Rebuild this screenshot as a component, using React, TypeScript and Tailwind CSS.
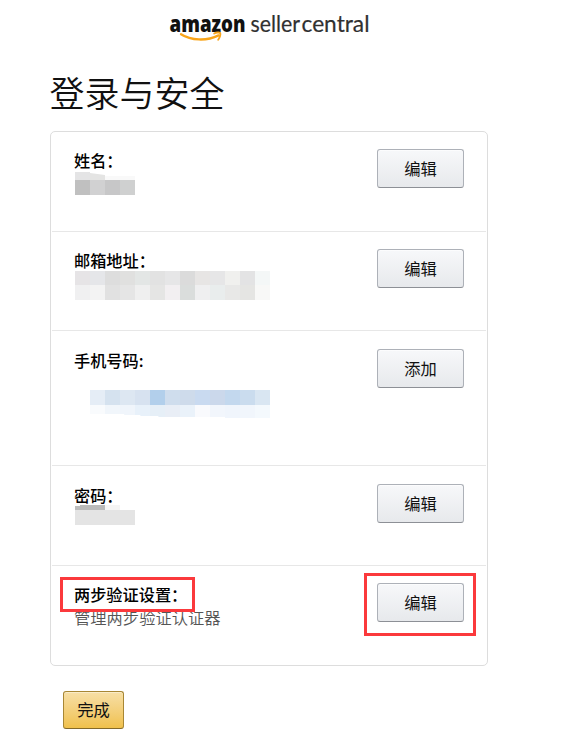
import type { ReactNode } from "react";
import clsx from "clsx";

type Cell = [w: number, color: string];

const nameCells: Cell[] = [[15, "#c0c0c0"], [15, "#d1d1d2"], [15, "#c7c7c8"], [15, "#cfd0d0"]];

const mailTop: Cell[] = [
  [15, "#e6e4e6"], [15, "#e5e6e9"], [15, "#dddddd"], [15, "#e0e0df"], [15, "#e3e6e5"], [15, "#e2e2e2"],
  [15, "#e6e6e7"], [15, "#dbdbdb"], [15, "#e7e5e4"], [15, "#e6e6e7"], [15, "#f0f0ee"], [15, "#e3e3e4"], [15, "#f4f7f7"],
];
const mailBottom: Cell[] = [
  [15, "#f0f0f1"], [15, "#f3f3f3"], [15, "#e1e1e1"], [15, "#e5e5e5"], [15, "#efefef"], [15, "#e5e5e4"],
  [15, "#f2eff1"], [15, "#dadddc"], [15, "#efeff0"], [15, "#e9eded"], [15, "#e8e8e7"], [15, "#e5e5e3"], [15, "#f8f8f7"],
];

const phoneTop: Cell[] = [
  [15, "#e5edf6"], [15, "#d5e2ef"], [15, "#dde7f2"], [15, "#d7e2f0"], [15, "#b2cfeb"], [15, "#cfdded"],
  [15, "#cedbeb"], [15, "#c9daf0"], [15, "#cbd8eb"], [15, "#c3d8ee"], [15, "#cadcee"], [15, "#d9e6f2"],
];
const phoneBottom: Cell[] = [
  [15, "#f9fbfd"], [15, "#f1f6fb"], [15, "#f0f5fb"], [15, "#e8f1fa"], [15, "#e6eff7"], [15, "#e9eef6"],
  [15, "#eaf2fa"], [15, "#f9fafd"], [15, "#f2f6fc"], [15, "#f0f5fc"], [15, "#f1f6fc"], [15, "#f4f9fd"],
];

const Mosaic = ({ cells, className }: { cells: Cell[]; className: string }) => (
  <div className={clsx("flex", className)}>
    {cells.map(([w, color], i) => (
      <span key={i} style={{ width: w, backgroundColor: color }} />
    ))}
  </div>
);

const EditButton = ({ children }: { children: ReactNode }) => (
  <button className="h-[39px] w-[87px] shrink-0 rounded-[3px] border border-[#adb1b8] border-b-[#8d9096] bg-linear-to-b from-[#f7f8fa] to-[#e7e9ec] text-[16.3px] leading-[37px] text-[#111] shadow-[inset_0_1px_0_rgba(255,255,255,0.6)]">
    {children}
  </button>
);

interface RowProps {
  label: string;
  action: string;
  className: string;
  highlight?: boolean;
  children?: ReactNode;
}

const Row = ({ label, action, className, highlight, children }: RowProps) => (
  <div className={clsx("mx-px flex justify-between border-[#e7e7e7] pr-[22px] pl-[22px]", className)}>
    <div>
      <div className="relative">
        <h2 className="h-6 text-[16.2px] leading-[22px] font-medium whitespace-nowrap text-black">{label}</h2>
        {highlight && <div className="absolute -top-[6px] -left-[14px] z-10 h-[35px] w-[135px] border-3 border-[#fb393c]" />}
      </div>
      {children}
    </div>
    <div className="relative">
      <EditButton>{action}</EditButton>
      {highlight && <div className="absolute -top-[10px] -left-[13px] h-[63px] w-[112px] border-3 border-[#fb393c]" />}
    </div>
  </div>
);

const Logo = () => (
  <svg className="ml-[168px] block overflow-visible" width="202" height="34" viewBox="0 0 202 34">
    <text x="1.5" y="22" fontFamily="Open Sans, sans-serif" fontSize="23.5" fontWeight="800" fill="#111" textLength="76" lengthAdjust="spacingAndGlyphs">
      amazon
    </text>
    <text x="82.5" y="22" fontFamily="Lato, sans-serif" fontSize="24" fill="#303030" stroke="#303030" strokeWidth=".2" textLength="49.500" lengthAdjust="spacingAndGlyphs">
      seller
    </text>
    <text x="133.500" y="22" fontFamily="Lato, sans-serif" fontSize="24" fill="#303030" stroke="#303030" strokeWidth=".2" textLength="68" lengthAdjust="spacingAndGlyphs">
      central
    </text>
    <path d="M13 24.200c10 6.400 25.500 7.200 37.600 1.200" fill="none" stroke="#f9a51a" strokeWidth="2.300" strokeLinecap="round" />
    <path d="M46.200 23.500c2-1.200 5.300-1.300 6-.5.500.8-.1 4.300-2 6.800" fill="none" stroke="#f9a51a" strokeWidth="1.900" strokeLinecap="round" />
  </svg>
);

const App = () => {
  return (
    <div className="h-[753px] w-[565px] overflow-hidden bg-white pt-[10px] font-['Noto_Sans_CJK_SC',sans-serif] text-[#111]">
      <Logo />
      <h1 className="mt-[23px] ml-[49.5px] h-[52px] text-[35px] leading-[50px] font-[350]">登录与安全</h1>

      <section className="mt-[12px] ml-[50px] w-[438px] rounded-[5px] border border-[#ddd]">
        <Row label="姓名：" action="编辑" className="h-[100px] border-b pt-[17px]">
          <div className="ml-px flex h-[7px] w-[60px]">
            <span className="mt-[-1px] w-[15px] bg-[#e4e4e5]" />
            <span className="w-[15px] bg-[#e4e4e3] [clip-path:polygon(0_0,100%_30%,100%_100%,0_100%)]" />
            <span className="mt-[3px] w-[30px] bg-[#f9f9f9]" />
          </div>
          <Mosaic cells={nameCells} className="ml-px h-[15px]" />
        </Row>
        <Row label="邮箱地址：" action="编辑" className="h-[99px] border-b pt-[17px]">
          <Mosaic cells={mailTop} className="mt-[-2px] ml-px h-[14px]" />
          <Mosaic cells={mailBottom} className="ml-px h-[15px]" />
        </Row>
        <Row label="手机号码:" action="添加" className="h-[135px] border-b pt-[18px]">
          <Mosaic cells={phoneTop} className="mt-[17px] ml-[16px] h-[15px]" />
          <Mosaic
            cells={phoneBottom}
            className="ml-[16px] h-[13px] [clip-path:polygon(0_0,100%_0,100%_100%,75%_100%,75%_12px,38%_12px,38%_11px,28%_11px,28%_10px,19%_10px,19%_9px,0_9px)]"
          />
        </Row>
        <Row label="密码：" action="编辑" className="h-[100px] border-b pt-[18px]">
          <div className="mt-[-3px] ml-px flex h-[5px]">
            <span className="mt-px w-[5px] bg-[#bdbdbd]" />
            <span className="w-[25px] bg-[#bababa]" />
            <span className="w-[15px] bg-[#f4f4f4]" />
          </div>
          <div className="ml-px h-[15px] w-[60px] bg-[#e4e4e4]" />
        </Row>
        <Row label="两步验证设置：" action="编辑" className="h-[99px] pt-[17px]" highlight>
          <p className="mt-[-2px] text-[16.3px] leading-6 font-[350] text-[#555]">管理两步验证认证器</p>
        </Row>
      </section>

      <button className="mt-[25px] ml-[63px] block h-[38px] w-[61px] rounded-[3px] border border-[#a88734] border-b-[#846a29] bg-linear-to-b from-[#f7dfa5] to-[#f0c14b] pb-[2px] text-[16.3px] leading-[34px] text-[#111] shadow-[inset_0_1px_0_rgba(255,255,255,0.4)]">
        完成
      </button>
    </div>
  );
};

export default App;
